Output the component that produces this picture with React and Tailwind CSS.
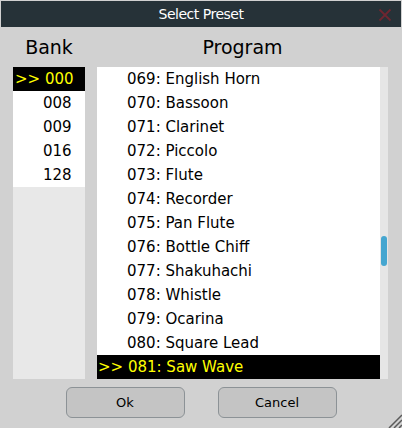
import React from "react";

const banks = ["000", "008", "009", "016", "128"];
const programs = [
  "069: English Horn",
  "070: Bassoon",
  "071: Clarinet",
  "072: Piccolo",
  "073: Flute",
  "074: Recorder",
  "075: Pan Flute",
  "076: Bottle Chiff",
  "077: Shakuhachi",
  "078: Whistle",
  "079: Ocarina",
  "080: Square Lead",
  "081: Saw Wave",
];

export default function App() {
  return (
    <div
      className="w-[402px] h-[428px] bg-[#d1d1d1] relative overflow-hidden flex flex-col"
      style={{ fontFamily: '"DejaVu Sans", Verdana, sans-serif' }}
    >
      <div className="mx-[1px] mt-[1px] h-[26px] bg-[#263238] relative flex items-center justify-center">
        <span className="text-[14px] tracking-[-0.5px] text-white leading-none">Select Preset</span>
        <svg className="absolute left-[377px] top-[7px]" width="14" height="14" viewBox="0 0 14 14">
          <path d="M1.5 1.5 L12.5 12.5 M12.5 1.5 L1.5 12.5" stroke="#6e2630" strokeWidth="1.8" />
        </svg>
      </div>
      <div className="flex pl-[13px] gap-[12px]">
        <div className="w-[72px] flex flex-col">
          <div className="h-[40px] flex items-center justify-center text-[19px] text-black">Bank</div>
          <div className="h-[312px] bg-[#e8e8e8] flex flex-col">
            {banks.map((b, i) =>
              i === 0 ? (
                <div key={b} className="h-[24px] bg-black text-[#ffff00] text-[15px] flex items-center pl-[2px] pt-[1px] whitespace-pre">
                  {">> " + b}
                </div>
              ) : (
                <div key={b} className="h-[24px] bg-white text-black text-[15px] flex items-center pl-[30px] pt-[1px]">
                  {b}
                </div>
              )
            )}
          </div>
        </div>
        <div className="w-[291px] flex flex-col">
          <div className="h-[40px] flex items-center justify-center text-[19px] text-black">Program</div>
          <div className="h-[312px] flex">
            <div className="w-[283px] bg-white flex flex-col">
              {programs.map((p, i) =>
                i === programs.length - 1 ? (
                  <div key={p} className="h-[24px] bg-black text-[#ffff00] text-[15px] flex items-center pl-[1px] pt-[1px] whitespace-pre">
                    {">> " + p}
                  </div>
                ) : (
                  <div key={p} className="h-[24px] text-black text-[15px] flex items-center pl-[30px] pt-[1px]">
                    {p}
                  </div>
                )
              )}
            </div>
            <div className="w-[8px] bg-[#e6e6e6] relative">
              <div className="absolute left-[1px] top-[169px] w-[6px] h-[30px] rounded-full bg-[#45a6d0]" />
            </div>
          </div>
        </div>
      </div>
      <div className="flex justify-center gap-[33px] mt-[8px]">
        <button className="w-[119px] h-[31px] rounded-[6px] border border-[#8c9296] bg-[#c4c4c4] text-[13px] text-black">
          Ok
        </button>
        <button className="w-[119px] h-[31px] rounded-[6px] border border-[#8c9296] bg-[#c4c4c4] text-[13px] text-black">
          Cancel
        </button>
      </div>
      <svg className="absolute right-0 bottom-0" width="16" height="16" viewBox="0 0 16 16">
        <path d="M16 3 L3 16 M16 8 L8 16 M16 13 L13 16" stroke="#5a5a5a" strokeWidth="1.5" />
      </svg>
    </div>
  );
}
